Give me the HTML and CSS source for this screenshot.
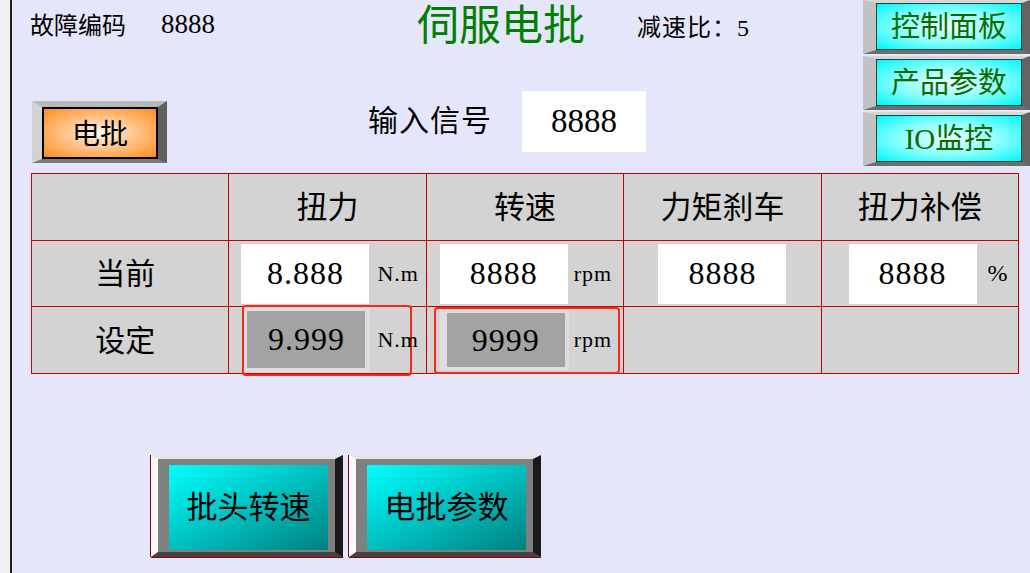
FILE: index.html
```html
<!DOCTYPE html>
<html lang="zh">
<head>
<meta charset="utf-8">
<title>伺服电批</title>
<link rel="stylesheet" href="styles.css">
</head>
<body>
<div class="screen">
  <div class="top">
    <div class="top-main">
      <div class="headline">
        <span class="fault-label">故障编码</span>
        <span class="fault-code">8888</span>
        <h1 class="title">伺服电批</h1>
        <span class="ratio">减速比：5</span>
      </div>
      <div class="controls">
        <button class="orange-btn"><span class="orange-face">电批</span></button>
        <div class="signal">
          <span class="signal-label">输入信号</span>
          <span class="signal-box">8888</span>
        </div>
      </div>
    </div>
    <nav class="nav">
      <button class="nav-btn"><span class="nav-face">控制面板</span></button>
      <button class="nav-btn"><span class="nav-face">产品参数</span></button>
      <button class="nav-btn"><span class="nav-face">IO监控</span></button>
    </nav>
  </div>

  <div class="grid">
    <div class="cell"></div>
    <div class="cell center txt">扭力</div>
    <div class="cell center txt">转速</div>
    <div class="cell center txt">力矩刹车</div>
    <div class="cell center txt">扭力补偿</div>

    <div class="cell center txt label">当前</div>
    <div class="cell torque-now">
      <span class="val-box">8.888</span><span class="unit unit-torque">N.m</span>
    </div>
    <div class="cell speed-now">
      <span class="val-box">8888</span><span class="unit unit-speed">rpm</span>
    </div>
    <div class="cell center">
      <span class="val-box">8888</span>
    </div>
    <div class="cell comp-now">
      <span class="val-box">8888</span><span class="unit unit-pct">%</span>
    </div>

    <div class="cell center txt label">设定</div>
    <div class="cell torque-set">
      <div class="set-outline torque-outline">
        <div class="set-frame torque-frame"><span class="set-val">9.999</span></div>
        <span class="unit unit-torque-set">N.m</span>
      </div>
    </div>
    <div class="cell speed-set">
      <div class="set-outline speed-outline">
        <div class="set-frame speed-frame"><span class="set-val">9999</span></div>
        <span class="unit unit-speed-set">rpm</span>
      </div>
    </div>
    <div class="cell"></div>
    <div class="cell"></div>
  </div>

  <div class="actions">
    <button class="act-btn"><span class="act-face">批头转速</span></button>
    <button class="act-btn"><span class="act-face">电批参数</span></button>
  </div>
</div>
</body>
</html>
```
FILE: styles.css
```css
html, body {
  margin: 0;
  padding: 0;
}

body {
  background: #f0f0f0;
  font-family: "Liberation Serif", "Noto Sans CJK SC", serif;
  color: #000;
  overflow: hidden;
}

button {
  font: inherit;
  color: inherit;
  margin: 0;
  cursor: pointer;
}

.screen {
  margin-left: 10px;
  border-left: 2px solid #1e1e1e;
  background: #e6e6fa;
  height: 573px;
  box-sizing: border-box;
  overflow: hidden;
}

/* ---------- top area ---------- */
.top {
  display: flex;
  height: 173px;
}

.top-main {
  flex: 1;
}

.headline {
  display: grid;
  grid-template-columns: 131px 256px 220px auto;
  align-items: center;
  height: 52px;
  padding-left: 18px;
}

.fault-label {
  font-size: 24px;
  margin-top: -5px;
}

.fault-code {
  font-size: 27px;
  margin-top: -3px;
}

.title {
  margin: 0;
  font-size: 42px;
  font-weight: normal;
  color: #008000;
  line-height: 1;
}

.ratio {
  font-size: 24px;
  letter-spacing: 1px;
  margin-top: -2px;
}

.controls {
  display: flex;
  align-items: flex-start;
}

.orange-btn {
  display: block;
  margin-left: 20px;
  margin-top: 49px;
  width: 135px;
  height: 62px;
  padding: 0;
  box-sizing: border-box;
  border-style: solid;
  border-width: 6px 9px 4px 10px;
  border-color: #b9b9b9 #5f5f5f #7a7a7a #d2d2d2;
  background: #b9b9b9;
}

.orange-face {
  display: flex;
  align-items: center;
  justify-content: center;
  height: 100%;
  box-sizing: border-box;
  border: 2px solid #000;
  padding-bottom: 2px;
  background: radial-gradient(ellipse at center, #fff8ee 0%, #ffc48a 45%, #ff8c1c 100%);
  font-size: 28px;
}

.signal {
  display: flex;
  align-items: center;
  margin-left: 201px;
  margin-top: 39px;
}

.signal-label {
  width: 154px;
  font-size: 30px;
  letter-spacing: 1px;
  padding-bottom: 8px;
}

.signal-box {
  width: 124px;
  height: 61px;
  background: #fff;
  display: flex;
  align-items: center;
  justify-content: center;
  font-size: 33px;
}

/* ---------- right navigation ---------- */
.nav {
  width: 167px;
  display: flex;
  flex-direction: column;
  gap: 2px;
}

.nav-btn {
  display: block;
  height: 54px;
  padding: 0;
  box-sizing: border-box;
  border-style: solid;
  border-width: 3px 8px 4px 13px;
  border-color: #d6d6d6 #646464 #6e6e6e #c2c2c2;
  background: #c2c2c2;
}

.nav-face {
  display: flex;
  align-items: center;
  justify-content: center;
  height: 100%;
  box-sizing: border-box;
  border: 1px solid #0b4b4b;
  padding-bottom: 5px;
  background: radial-gradient(ellipse at center, #ecffff 0%, #8affff 50%, #00f6f6 100%);
  color: #0d6a00;
  font-size: 29px;
}

/* ---------- data grid ---------- */
.grid {
  margin-left: 19px;
  width: 988px;
  box-sizing: border-box;
  display: grid;
  grid-template-columns: repeat(5, 1fr);
  grid-template-rows: 66px 65px 66px;
  gap: 1px;
  padding: 1px;
  background: #cc0000;
}

.cell {
  background: #d3d3d3;
  display: flex;
  align-items: center;
  font-size: 31px;
  min-width: 0;
}

.center {
  justify-content: center;
}

.txt {
  padding-bottom: 5px;
}

.label {
  padding-right: 10px;
  font-size: 30px;
}

.val-box {
  flex-shrink: 0;
  width: 128px;
  height: 60px;
  background: #fff;
  display: flex;
  align-items: center;
  justify-content: center;
  font-size: 32px;
  letter-spacing: 1px;
}

.unit {
  flex-shrink: 0;
  font-size: 22px;
  letter-spacing: 1px;
  white-space: nowrap;
}

.torque-now { padding-left: 12px; }
.speed-now { padding-left: 13px; }
.comp-now { padding-left: 27px; }

.unit-torque { margin-left: 8px; }
.unit-speed { margin-left: 6px; }
.unit-pct { margin-left: 11px; font-size: 24px; }

.torque-set { padding-left: 13px; }
.speed-set { padding-left: 7px; }

.set-outline {
  flex-shrink: 0;
  display: flex;
  align-items: center;
  box-sizing: border-box;
  border: 2px solid #ff2418;
  border-radius: 4px;
}

.torque-outline {
  width: 170px;
  height: 71px;
}

.speed-outline {
  width: 186px;
  height: 67px;
  padding-left: 4px;
}

.set-frame {
  flex-shrink: 0;
  box-sizing: border-box;
  background: #dedede;
  display: flex;
}

.torque-frame {
  width: 126px;
  height: 64px;
  padding: 3px 5px 4px 3px;
}

.speed-frame {
  width: 129px;
  height: 60px;
  padding: 3px 4px 3px 7px;
}

.set-val {
  flex: 1;
  background: #a3a3a3;
  display: flex;
  align-items: center;
  justify-content: center;
  font-size: 32px;
  letter-spacing: 1px;
}

.unit-torque-set { margin-left: 7px; }
.unit-speed-set { margin-left: 5px; }

/* ---------- bottom actions ---------- */
.actions {
  display: flex;
  gap: 6px;
  margin-left: 139px;
  margin-top: 81px;
}

.act-btn {
  display: block;
  width: 192px;
  height: 102px;
  box-sizing: border-box;
  border-style: solid;
  border-width: 4px 8px 5px 7px;
  border-color: #e4e4e4 #1a1a1a #444444 #fafafa;
  padding: 6px 7px 2px 11px;
  background: #808080;
  box-shadow: -1px 0 0 #8b0000, 0 1px 0 #8b0000;
}

.act-face {
  display: flex;
  align-items: center;
  justify-content: center;
  height: 100%;
  padding-bottom: 6px;
  box-sizing: border-box;
  background: linear-gradient(to bottom right, #00ffff 0%, #00c0c0 50%, #008080 100%);
  font-size: 31px;
  color: #000;
}
```
